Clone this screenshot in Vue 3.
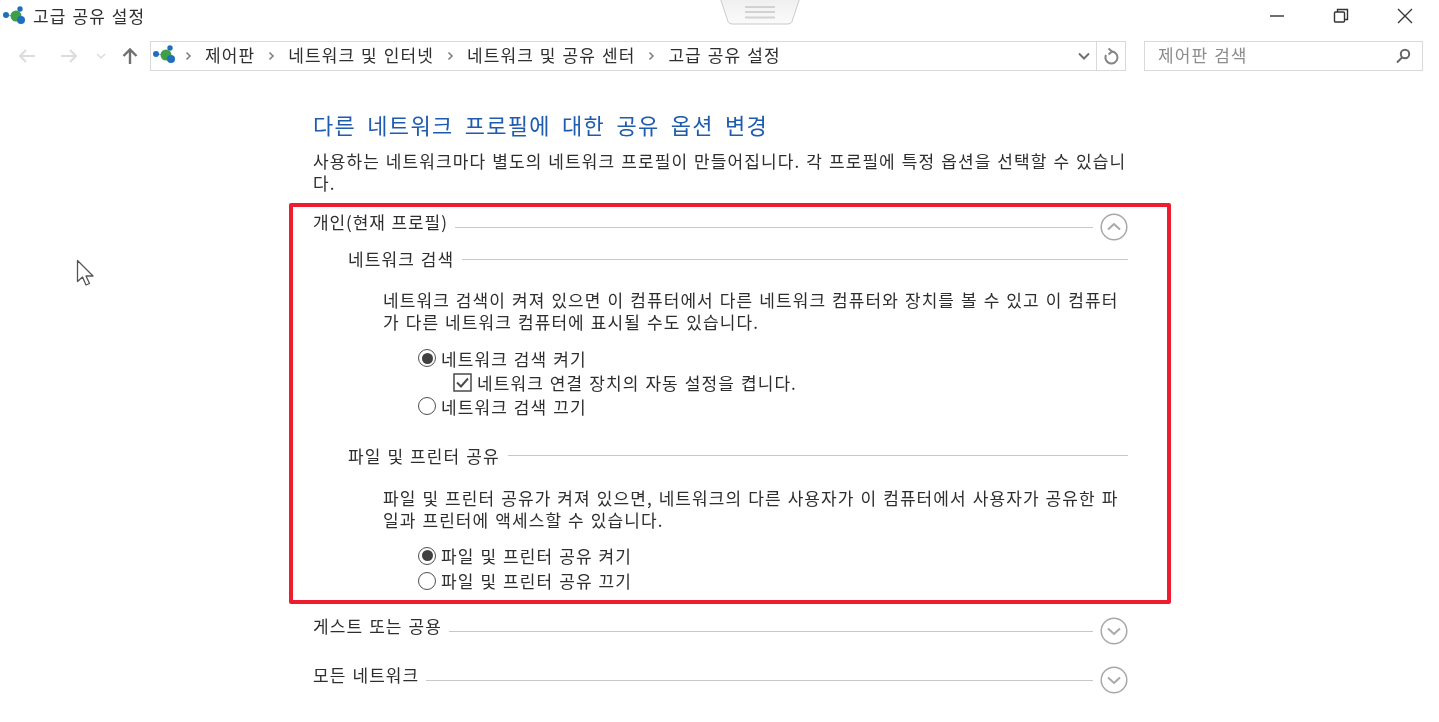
<template>
  <div class="window">
    <header class="titlebar">
      <svg class="app-icon" width="26" height="24" viewBox="0 0 26 24"><use href="#net-icon" /></svg>
      <span class="title">고급 공유 설정</span>
      <div class="win-buttons">
        <button class="win-btn">
          <svg width="16" height="16" viewBox="0 0 16 16"><path d="M1 8h14" stroke="#333" stroke-width="1.4" /></svg>
        </button>
        <button class="win-btn">
          <svg width="16" height="16" viewBox="0 0 16 16" fill="none" stroke="#333" stroke-width="1.4"><rect x="1.5" y="4" width="10" height="10" rx="1" /><path d="M4.5 4V1.5h10v10H11.500" /></svg>
        </button>
        <button class="win-btn">
          <svg width="16" height="16" viewBox="0 0 16 16"><path d="M1 1l14 14M15 1L1 15" stroke="#333" stroke-width="1.3" /></svg>
        </button>
      </div>
    </header>

    <svg class="defs" width="0" height="0">
      <defs>
        <g id="net-icon">
          <line x1="6" y1="13" x2="16" y2="14" stroke="#7aa7d0" stroke-width="1" />
          <circle cx="6" cy="13" r="3" fill="#1f6fbd" />
          <circle cx="16" cy="14" r="5.500" fill="#3f9e48" />
          <circle cx="20" cy="7" r="2.700" fill="#1f6fbd" />
          <circle cx="21" cy="18" r="4" fill="#1f6fbd" />
        </g>
      </defs>
    </svg>

    <svg class="grip" width="80" height="26" viewBox="0 0 80 26">
      <defs>
        <linearGradient id="grip-fill" x1="0" y1="0" x2="0" y2="1">
          <stop offset="0" stop-color="#efefef" />
          <stop offset="1" stop-color="#fbfbfb" />
        </linearGradient>
      </defs>
      <path d="M0.500 -1L8 21.500Q9 24 12 24H68Q71 24 72 21.500L79.500 -1" fill="url(#grip-fill)" stroke="#c9c9c9" stroke-width="1" />
      <path d="M25 7h30M25 12h30M25 17.500h30" stroke="#d2d2d2" stroke-width="2" />
    </svg>

    <nav class="navbar">
      <div class="nav-arrows">
        <svg width="20" height="16" viewBox="0 0 20 16" fill="none" stroke="#dcdcdc" stroke-width="2"><path d="M18 8H3M9 2L3 8l6 6" /></svg>
        <svg width="20" height="16" viewBox="0 0 20 16" fill="none" stroke="#dcdcdc" stroke-width="2"><path d="M2 8h15M11 2l6 6-6 6" /></svg>
        <svg width="10" height="6" viewBox="0 0 10 6" fill="none" stroke="#dcdcdc" stroke-width="1.500"><path d="M1 1l4 4 4-4" /></svg>
        <svg width="18" height="18" viewBox="0 0 18 18" fill="none" stroke="#707070" stroke-width="2.400"><path d="M9 17V3M2.500 9L9 2.500 15.500 9" /></svg>
      </div>
      <div class="address">
        <svg class="addr-icon" width="26" height="24" viewBox="0 0 26 24"><use href="#net-icon" /></svg>
        <template v-for="crumb in crumbs" :key="crumb">
          <svg class="sep" width="7" height="10" viewBox="0 0 7 10" fill="none" stroke="#808080" stroke-width="1.600"><path d="M1.500 1.500L5 5 1.500 8.500" /></svg>
          <span class="crumb">{{ crumb }}</span>
        </template>
        <div class="addr-tools">
          <svg width="14" height="9" viewBox="0 0 14 9" fill="none" stroke="#707070" stroke-width="2"><path d="M2 1.500l5 5 5-5" /></svg>
          <span class="refresh">
            <svg width="16" height="18" viewBox="0 0 16 18" fill="none" stroke="#858585" stroke-width="2"><path d="M5.500 1.500L9 4.500 5.500 7.500" /><path d="M8.500 4.500A6 6 0 1 1 3 8" /></svg>
          </span>
        </div>
      </div>
      <div class="search">
        <span class="search-text">제어판 검색</span>
        <svg width="16" height="16" viewBox="0 0 16 16" fill="none" stroke="#666" stroke-width="2"><circle cx="10" cy="6" r="4.200" /><path d="M7 9.500L2 14.500" /></svg>
      </div>
    </nav>

    <main class="content">
      <h1 class="heading">다른 네트워크 프로필에 대한 공유 옵션 변경</h1>
      <p class="intro">사용하는 네트워크마다 별도의 네트워크 프로필이 만들어집니다. 각 프로필에 특정 옵션을 선택할 수 있습니<br />다.</p>

      <div class="profile-head first">
        <span class="profile-name">개인(현재 프로필)</span>
        <span class="rule"></span>
        <svg class="toggle" width="28" height="28" viewBox="0 0 28 28" fill="none" stroke="#a8a8a8"><circle cx="14" cy="14" r="12.800" stroke-width="1.500" /><path d="M8 16.500l6-5.500 6 5.500" stroke-width="2" /></svg>
      </div>

      <section v-for="group in groups" :key="group.name" class="group" :class="group.cls">
        <div class="group-head">
          <span>{{ group.name }}</span>
          <span class="rule"></span>
        </div>
        <p class="group-text">{{ group.line1 }}<br />{{ group.line2 }}</p>
        <div class="options">
          <template v-for="opt in group.options" :key="opt.label">
            <label v-if="opt.type === 'radio'" class="option">
              <span class="radio" :class="{ on: opt.on }"></span>{{ opt.label }}
            </label>
            <label v-else class="option check-option">
              <svg class="check" width="19" height="19" viewBox="0 0 19 19" fill="none"><rect x="1" y="1" width="17" height="17" stroke="#4a4a4a" stroke-width="1.500" /><path d="M4 9.500l4 4 7-8" stroke="#4a4a4a" stroke-width="1.900" /></svg>{{ opt.label }}
            </label>
          </template>
        </div>
      </section>

      <div class="profile-head guest">
        <span class="profile-name">게스트 또는 공용</span>
        <span class="rule"></span>
        <svg class="toggle" width="28" height="28" viewBox="0 0 28 28" fill="none" stroke="#a8a8a8"><circle cx="14" cy="14" r="12.800" stroke-width="1.500" /><path d="M8 11.500l6 5.500 6-5.500" stroke-width="2" /></svg>
      </div>
      <div class="profile-head all">
        <span class="profile-name">모든 네트워크</span>
        <span class="rule"></span>
        <svg class="toggle" width="28" height="28" viewBox="0 0 28 28" fill="none" stroke="#a8a8a8"><circle cx="14" cy="14" r="12.800" stroke-width="1.500" /><path d="M8 11.500l6 5.500 6-5.500" stroke-width="2" /></svg>
      </div>
    </main>

    <!-- annotation drawn on top of the screenshot -->
    <div class="highlight"></div>
    <svg class="pointer" width="20" height="28" viewBox="0 0 20 28"><path d="M1.500 1.500v21l5-4.500 3.500 8 3.500-1.500-3.500-7.500h7z" fill="#fff" stroke="#555" stroke-width="1.300" stroke-linejoin="round" /></svg>
  </div>
</template>

<script setup>
const crumbs = ['제어판', '네트워크 및 인터넷', '네트워크 및 공유 센터', '고급 공유 설정']

const groups = [
  {
    name: '네트워크 검색',
    cls: 'discovery',
    line1: '네트워크 검색이 켜져 있으면 이 컴퓨터에서 다른 네트워크 컴퓨터와 장치를 볼 수 있고 이 컴퓨터',
    line2: '가 다른 네트워크 컴퓨터에 표시될 수도 있습니다.',
    options: [
      { type: 'radio', label: '네트워크 검색 켜기', on: true },
      { type: 'check', label: '네트워크 연결 장치의 자동 설정을 켭니다.' },
      { type: 'radio', label: '네트워크 검색 끄기', on: false }
    ]
  },
  {
    name: '파일 및 프린터 공유',
    cls: 'sharing',
    line1: '파일 및 프린터 공유가 켜져 있으면, 네트워크의 다른 사용자가 이 컴퓨터에서 사용자가 공유한 파',
    line2: '일과 프린터에 액세스할 수 있습니다.',
    options: [
      { type: 'radio', label: '파일 및 프린터 공유 켜기', on: true },
      { type: 'radio', label: '파일 및 프린터 공유 끄기', on: false }
    ]
  }
]
</script>

<style>
body {
  background: #fff;
}
</style>

<style scoped>
.window {
  position: relative;
  width: 1439px;
  height: 722px;
  overflow: hidden;
  background: #fff;
  color: #2e2e2e;
  font-family: "Noto Sans CJK KR", "Noto Sans", sans-serif;
  font-size: 17px;
  letter-spacing: 1.100px;
  word-spacing: 1px;
  filter: blur(0.35px);
}

.defs {
  position: absolute;
}

.titlebar {
  display: flex;
  align-items: center;
  height: 32px;
}

.app-icon {
  flex: none;
  margin-top: -5px;
}

.title {
  margin-left: 7px;
  line-height: 32px;
}

.win-buttons {
  display: flex;
  margin-left: auto;
  padding-right: 2px;
}

.win-btn {
  display: flex;
  align-items: center;
  justify-content: center;
  width: 64px;
  height: 30px;
  padding: 0;
  border: 0;
  background: none;
}

.grip {
  position: absolute;
  top: 0;
  left: 720px;
}

.navbar {
  display: flex;
  align-items: center;
  height: 30px;
  margin-top: 9px;
}

.nav-arrows {
  display: flex;
  align-items: center;
  flex: none;
  width: 150px;
  padding-left: 17px;
  box-sizing: border-box;
  gap: 22px;
}

.nav-arrows svg:nth-child(3) {
  margin-left: -5px;
  margin-right: -7px;
}

.address {
  display: flex;
  align-items: center;
  flex: none;
  width: 976px;
  height: 30px;
  box-sizing: border-box;
  border: 1px solid #d9d9d9;
}

.addr-icon {
  flex: none;
  margin-left: -1px;
  margin-top: -7px;
}

.addr-icon + .sep {
  margin-left: 9px;
}

.sep {
  flex: none;
  margin: 0 13px;
}

.crumb {
  margin-top: -3px;
  white-space: nowrap;
}

.addr-tools {
  display: flex;
  align-items: center;
  margin-left: auto;
  height: 100%;
}

.refresh {
  display: flex;
  align-items: center;
  justify-content: center;
  width: 28px;
  height: 100%;
  margin-left: 5px;
  border-left: 1px solid #d9d9d9;
}

.search {
  display: flex;
  align-items: center;
  justify-content: space-between;
  flex: none;
  width: 279px;
  height: 30px;
  margin-left: 18px;
  padding: 0 11px 0 13px;
  box-sizing: border-box;
  border: 1px solid #d9d9d9;
  color: #8c8c8c;
}

.search-text {
  margin-top: -3px;
}

.content {
  width: 815px;
  margin-left: 313px;
}

.heading {
  margin: 37px 0 0;
  color: #1f5cb0;
  font-size: 22px;
  font-weight: 400;
  line-height: 32px;
  letter-spacing: 1.300px;
  word-spacing: 5px;
}

.intro {
  margin: 10px 0 0;
  line-height: 22px;
  white-space: nowrap;
}

.profile-head {
  display: flex;
  align-items: flex-start;
  height: 28px;
}

.profile-head.first {
  margin-top: 19px;
}

.profile-head.first .profile-name {
  letter-spacing: 0.900px;
}

.profile-head.guest {
  margin-top: 24px;
}

.profile-head.all {
  margin-top: 21px;
}

.profile-name {
  line-height: 18px;
  white-space: nowrap;
}

.rule {
  flex: 1;
  height: 1px;
  background: #c8c8c8;
}

.profile-head .rule {
  margin: 14px 7px 0;
}

.toggle {
  flex: none;
}

.group-head {
  display: flex;
  align-items: center;
  height: 22px;
  margin-left: 35px;
}

.group-head .rule {
  margin-left: 8px;
}

.discovery .group-head .rule {
  margin-top: 2px;
}

.group.discovery {
  margin-top: 6px;
}

.group.sharing {
  margin-top: 26px;
}

.group-text {
  margin: 20px 0 0 70px;
  line-height: 22px;
  white-space: nowrap;
}

.sharing .group-text {
  margin-top: 21px;
}

.options {
  display: flex;
  flex-direction: column;
  margin: 13px 0 0 105px;
}

.sharing .options {
  margin-top: 12px;
}

.option {
  display: flex;
  align-items: center;
  height: 24px;
  white-space: nowrap;
}

.sharing .option {
  height: 25px;
}

.check-option {
  margin-left: 35px;
}

.radio {
  position: relative;
  flex: none;
  width: 18px;
  height: 18px;
  margin-right: 5px;
  box-sizing: border-box;
  border: 1.500px solid #4f4f4f;
  border-radius: 50%;
}

.radio.on::after {
  content: "";
  position: absolute;
  inset: 2.500px;
  border-radius: 50%;
  background: #404040;
}

.check {
  flex: none;
  margin-right: 5px;
}

.highlight {
  position: absolute;
  left: 289px;
  top: 203px;
  width: 882px;
  height: 401px;
  box-sizing: border-box;
  border: 4px solid #ee1c2e;
  border-radius: 2px;
  pointer-events: none;
}

.pointer {
  position: absolute;
  left: 76px;
  top: 259px;
}
</style>
